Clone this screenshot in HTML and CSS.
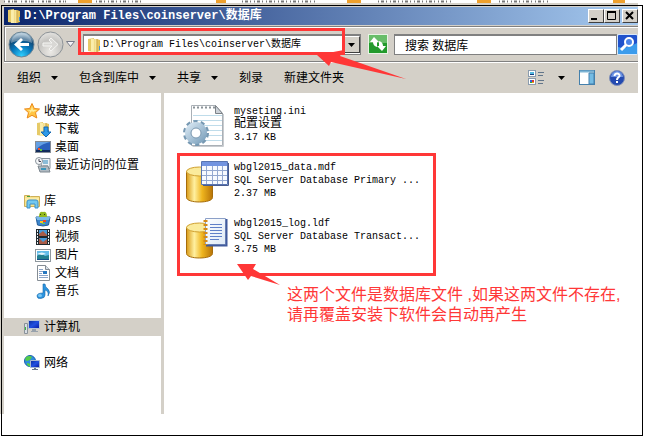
FILE: index.html
```
<!DOCTYPE html>
<html lang="zh-CN">
<head>
<meta charset="utf-8">
<title>数据库</title>
<link rel="stylesheet" href="styles.css">
</head>
<body>
<svg width="0" height="0" class="defs" aria-hidden="true">
  <defs>
    <linearGradient id="gold" x1="0" x2="1"><stop offset="0" stop-color="#d99a16"/><stop offset=".3" stop-color="#fff0a0"/><stop offset=".6" stop-color="#efb51e"/><stop offset="1" stop-color="#b87408"/></linearGradient>
    <linearGradient id="folder" x1="0" x2="1"><stop offset="0" stop-color="#fbf0b0"/><stop offset="1" stop-color="#e2bd50"/></linearGradient>
    <linearGradient id="screen" x1="0" y1="0" x2="1" y2="1"><stop offset="0" stop-color="#0a2a9c"/><stop offset=".5" stop-color="#2050e0"/><stop offset="1" stop-color="#0818a0"/></linearGradient>
    <linearGradient id="sheet" x1="0" y1="0" x2="1" y2="1"><stop offset="0" stop-color="#fff"/><stop offset="1" stop-color="#dde9f6"/></linearGradient>
    <linearGradient id="gear" x1="0" y1="0" x2="1" y2="1"><stop offset="0" stop-color="#d4e4f0"/><stop offset="1" stop-color="#7fa3be"/></linearGradient>
    <radialGradient id="backBall" cx=".5" cy=".95" r=".9"><stop offset="0" stop-color="#2fd0ff"/><stop offset=".45" stop-color="#0878bc"/><stop offset=".75" stop-color="#124b78"/><stop offset="1" stop-color="#a9c4d6"/></radialGradient>
    <radialGradient id="fwdBall" cx=".5" cy=".8" r=".8"><stop offset="0" stop-color="#eceae6"/><stop offset=".6" stop-color="#c5c4c1"/><stop offset="1" stop-color="#e4e3e0"/></radialGradient>
    <symbol id="i-folder" viewBox="0 0 16 16"><path d="M2 2 8 1v14l-6-1z" fill="#e6ca68"/><path d="M5 2h6l3 1v11l-3 1H5z" fill="url(#folder)"/><path d="M7 2v13M10 2v13" stroke="#fff3b8"/><path d="M11 2v13" stroke="#c9a240"/><path d="M13 9h1v4h-1z" fill="#3c92dc"/></symbol>
    <symbol id="i-db" viewBox="0 0 27 36"><path d="M.5 5v26c0 6 26 6 26 0V5z" fill="url(#gold)" stroke="#a66d0c"/><ellipse cx="13.500" cy="5" rx="13" ry="4.500" fill="#fbeb9c" stroke="#d0a030"/></symbol>
  </defs>
</svg>

<div class="page">
  <main class="window">
    <svg class="strip" height="3" aria-hidden="true">
      <path d="M0 1.500h62" stroke="#777" stroke-width="2" stroke-dasharray="1 3 2 2 1 1 3 4"/>
      <path d="M92 1.500h48M238 1.500h75M374 1.500h75M495 1.500h50" stroke="#777" stroke-width="2" stroke-dasharray="1 2 3 2 1 3"/>
      <path d="M74 1.500h14M212 1.500h10M343 1.500h14M473 1.500h14M609 1.500h12" stroke="#eea02d" stroke-width="3"/>
    </svg>
    <header class="titlebar">
      <svg width="16" height="16"><use href="#i-folder"/></svg>
      <h1>D:\Program Files\coinserver\数据库</h1>
      <div class="winbtns">
        <button aria-label="最小化"><svg width="12" height="10"><path d="M2 8h6" stroke="#000" stroke-width="2"/></svg></button>
        <button aria-label="最大化"><svg width="12" height="10"><path d="M2.500 1v7.500h8V1" fill="none" stroke="#000"/><path d="M2 1h9" stroke="#000" stroke-width="2"/></svg></button>
        <button class="close" aria-label="关闭"><svg width="12" height="10"><path d="m3 1 7 7m0-7L3 8" stroke="#000" stroke-width="2"/></svg></button>
      </div>
    </header>

    <nav class="navbar">
      <div class="travel">
        <button aria-label="后退"><svg width="27" height="27" viewBox="0 0 27 27"><circle cx="13.500" cy="13.500" r="12.500" fill="url(#backBall)" stroke="#6c8494"/><path d="M3 12C4-1 23-1 24 12c-6-3-15-3-21 0z" fill="#fff" opacity=".35"/><path d="m13 7-7 6.500 7 6.500 2-2-3-3h9v-3h-9l3-3z" fill="#fff"/></svg></button>
        <button aria-label="前进"><svg width="27" height="27" viewBox="0 0 27 27"><circle cx="13.500" cy="13.500" r="12.500" fill="url(#fwdBall)" stroke="#8c9297"/><path d="m14 7 7 6.500-7 6.500-2-2 3-3H6v-3h9l-3-3z" fill="#d9d8d5" stroke="#f4f4f2"/></svg></button>
        <button aria-label="最近的页面"><svg width="9" height="7"><path d="M.5.500h8L4.500 5.500z" fill="#f4f4f8" stroke="#777b88"/></svg></button>
      </div>
      <div class="address">
        <svg width="16" height="16"><use href="#i-folder"/></svg>
        <input type="text" aria-label="地址" value="D:\Program Files\coinserver\数据库">
        <button class="drop" aria-label="以前的位置"><svg width="7" height="4"><path d="M0 0h7L3.500 4z"/></svg></button>
      </div>
      <button class="refresh" aria-label="刷新"><svg width="20" height="20"><rect width="20" height="20" fill="#e8f4e4"/><rect x="1" y="1" width="18" height="18" fill="#239a2c"/><path d="M1 1h18v8H1z" fill="#68bd69"/><path d="m6 3-4 5h3q0 4 4 5V8h2zM14 17l4-5h-3q0-4-4-5v5H9z" fill="#fff"/></svg></button>
      <input class="search" type="text" aria-label="搜索" value="搜索 数据库">
      <button class="go" aria-label="开始搜索"><svg width="21" height="21"><rect width="21" height="21" rx="2" fill="#d8e8fa"/><rect x="1" y="1" width="19" height="19" rx="1" fill="#2052cc"/><path d="M1 13c7 2 13-1 19-4v11H1z" fill="#3c9cec"/><circle cx="12" cy="8" r="4" fill="#4b83e8" stroke="#fff" stroke-width="2"/><path d="m9 11-5 5" stroke="#fff" stroke-width="3"/></svg></button>
    </nav>

    <div class="toolbar">
      <button>组织<svg class="caret" width="7" height="4"><path d="M0 0h7L3.500 4z"/></svg></button>
      <button>包含到库中<svg class="caret" width="7" height="4"><path d="M0 0h7L3.500 4z"/></svg></button>
      <button>共享<svg class="caret" width="7" height="4"><path d="M0 0h7L3.500 4z"/></svg></button>
      <button>刻录</button>
      <button>新建文件夹</button>
      <div class="views">
        <button aria-label="更改视图"><svg width="16" height="16"><rect x=".5" y=".5" width="7" height="6" fill="#fff" stroke="#8b9cae"/><path d="M2 2h4v2H2z" fill="#54b8e0"/><path d="M2 4h4v1H2z" fill="#173e80"/><rect x=".5" y="8.500" width="7" height="6" fill="#fff" stroke="#8b9cae"/><path d="M2 10h2v2H2z" fill="#2b5fe0"/><path d="M4 10h2v2H4z" fill="#e03c28"/><path d="M2 12h2v1H2z" fill="#38a828"/><path d="M4 12h2v1H4z" fill="#e8a820"/><path d="M10 2.500h6M10 5.500h5M10 10.500h6M10 13.500h5" stroke="#62758a"/></svg></button>
        <button aria-label="更多选项"><svg class="caret" width="7" height="4"><path d="M0 0h7L3.500 4z"/></svg></button>
        <button aria-label="预览窗格"><svg width="16" height="15"><rect x=".5" y=".5" width="15" height="14" fill="#fff" stroke="#4480ac"/><path d="M1 1.500h14" stroke="#7db4d4" stroke-width="2"/><path d="M10 3h5v11h-5z" fill="#74bce4" stroke="#4480ac"/></svg></button>
        <button aria-label="帮助"><svg width="16" height="16"><circle cx="8" cy="8" r="7.500" fill="#244ab0" stroke="#8190b8"/><path d="M2 7a6 6 0 0 1 12 0z" fill="#6b92e2"/><path d="M5.500 6C5.500 2.500 11 3 10.500 6 10 7.500 8 7.500 8 10" fill="none" stroke="#fff" stroke-width="2"/><path d="M7 11h2v2H7z" fill="#fff"/></svg></button>
      </div>
    </div>

    <div class="body">
      <aside class="sidebar">
        <ul>
          <li class="top"><svg width="16" height="16"><path d="m8 .5 2.300 5 5.200.5-4 3.700 1.300 5.300L8 12.300 3.200 15l1.300-5.300-4-3.700 5.200-.5z" fill="#ffc544" stroke="#ec8a1a"/><path d="m8 3 1 4 4 0-4 2-1-1-3 3 1-3-3-1 4 0z" fill="#ffed9c"/></svg>收藏夹</li>
          <li><svg width="16" height="16"><use href="#i-folder"/><path d="M9 6h4v5h3l-5 5-5-5h3z" fill="#2e9ae8" stroke="#1668b0"/></svg>下载</li>
          <li><svg width="16" height="16"><rect x=".5" y="2.500" width="15" height="11" fill="#2b60bc" stroke="#848c96"/><path d="M1 3h14C8 5 4 7 1 11z" fill="#64a0e4"/><path d="M1 11h14v2H1z" fill="#122c5c"/><path d="M3 9h2v2H3z" fill="#f05428"/><path d="M5 10h2v2H5z" fill="#60c840"/></svg>桌面</li>
          <li><svg width="16" height="16"><path d="M5 1.500h10v10h-8z" fill="#eef2f6" stroke="#8a949c"/><path d="M8 3h5v4H8z" fill="#8bbcd8"/><path d="M8 8h5v2H8z" fill="#b9c4cc"/><path d="M3 9h10l2 6H5z" fill="#b0bac2" stroke="#7e8890"/><path d="M6 11h5v2H6z" fill="#3d96bc"/><circle cx="4" cy="4" r="3.500" fill="#f6f8fa" stroke="#8a949c"/><path d="M4 2v2.500h2" stroke="#445" fill="none"/></svg>最近访问的位置</li>
        </ul>
        <ul>
          <li class="top"><svg width="16" height="16"><path d="M.5 2.500h5l1 1h9v10H.5z" fill="#f8e38c" stroke="#ceb058"/><path d="M3 3h3v1H3z" fill="#46a044"/><path d="M1 6h14" stroke="#fff5c4"/><path d="M3 15V9q0-2 2-2h7q2 0 2 2v6h-3v-4H6v4z" fill="#72c8f0" stroke="#3c90c8"/></svg>库</li>
          <li><svg width="16" height="16"><path d="M1 6h14l-1.500 8q-5.500 2-11 0z" fill="#3b85cc" stroke="#225c98"/><path d="M4 6q0-6 4-5 4-1 4 5z" fill="#92b820"/><path d="M5 3h1v1H5zM9 3h1v1H9z" fill="#304010"/><path d="M1 6h14l-1 3H2z" fill="#79b9e8"/><path d="M5 10h3v2H5z" fill="#f8c820"/><path d="M8 9h3v2H8z" fill="#ec4828"/><path d="M7 12h3v1H7z" fill="#78d038"/></svg><span class="latin">Apps</span></li>
          <li><svg width="16" height="16"><path d="M1 0h14v16H1z" fill="#20282e"/><path d="M4 1h8v6H4zM4 9h8v6H4z" fill="#4599d8"/><path d="m4 5 4-3 4 4v1H4zM4 9l4 4 4-3v5H4z" fill="#a85c48"/><path d="M2.500 1v14M13.500 1v14" stroke="#e8eef2" stroke-dasharray="2 1"/></svg>视频</li>
          <li><svg width="16" height="16"><rect x=".5" y="2.500" width="15" height="12" fill="#fff" stroke="#8f989e"/><path d="M2 4h12v9H2z" fill="#65bce8"/><path d="M2 9q4-4 8 0l4-1v5H2z" fill="#248090"/><path d="M2 7q5-3 9 0l-4 1z" fill="#e5f6fc"/><path d="M2 12h12v1H2z" fill="#16508a"/></svg>图片</li>
          <li><svg width="16" height="16"><path d="M2.500.500h8l4 4v11h-12z" fill="#fff" stroke="#858d94"/><path d="M10.500.500v4h4" fill="#d8e0e8" stroke="#858d94"/><path d="M4 4.500h4M4 6.500h4M4 8.500h3M4 10.500h9M4 12.500h9" stroke="#8ba4c8"/><path d="M8 6h4v3H8z" fill="#2878c0"/></svg>文档</li>
          <li><svg width="16" height="16"><path d="M8 1h2q0 3 3 5 3 3 0 7 1-5-3-6v5q0 3-4 3.500Q2 16 2 13q0-3 6-3z" fill="#2c94e0" stroke="#1a68a8" stroke-width=".6"/><ellipse cx="5" cy="12.500" rx="2" ry="1.500" fill="#7cc8f4"/></svg>音乐</li>
        </ul>
        <ul>
          <li class="top selected"><svg width="16" height="16"><path d="M4.500 1.500h11v8h-11z" fill="url(#screen)" stroke="#b8c4d4"/><path d="M8 10h4v2h2v1H7v-1h1z" fill="#98a2ac"/><path d="M.5 4.500h3v10H.500z" fill="#d8dee4" stroke="#8a929a"/><path d="M1 8h1v3H1z" fill="#36b844"/></svg>计算机</li>
        </ul>
        <ul>
          <li class="top"><svg width="16" height="16"><circle cx="6" cy="6" r="5.500" fill="#2e8cdc" stroke="#1b60b0"/><path d="M2 2q4-2 6 0L6 5 3 6 1 5zM3 8l4 1-1 3-3-2z" fill="#55cc48"/><path d="M6.500 5.500h9v7h-9z" fill="url(#screen)" stroke="#a8b8d0"/><path d="M10 13h2v1h2v1H8v-1h2z" fill="#68788c"/></svg>网络</li>
        </ul>
      </aside>

      <section class="files">
        <article>
          <svg width="48" height="48"><path d="M9.500 3.500h24l7 8v32h-31z" fill="#fff" stroke="#aab0b6"/><path d="M33.500 3.500v8h7z" fill="#ccd2d8" stroke="#7c8288"/><path d="M11 13.500h29M11 18.500h29M11 23.500h29M11 28.500h29M11 33.500h29M11 38.500h29" stroke="#bfdcea"/><path d="M11 5.500h22" stroke="#8a9298" stroke-width="2" stroke-dasharray="2 2"/><path d="M41.500 12v32.500h-31" fill="none" stroke="#c8ccd0"/><circle cx="14" cy="31" r="11" fill="none" stroke="#7698b2" stroke-width="4" stroke-dasharray="4 3"/><circle cx="14" cy="31" r="8" fill="none" stroke="url(#gear)" stroke-width="6"/><circle cx="14" cy="31" r="5" fill="#fff" stroke="#7897b0"/></svg>
          <p><span>myseting.ini</span><span class="cjk">配置设置</span><span>3.17 KB</span></p>
        </article>
        <article>
          <svg width="48" height="48"><use href="#i-db" x="4" y="8" width="27" height="37"/><path d="M19.500 3.500h26v23h-26z" fill="#f7faff" stroke="#5874b0"/><path d="M20 4h25v4H20z" fill="#7294e0"/><path d="M20 12.500h25M20 17.500h25M20 22.500h25M24.500 8v18M30.500 8v18M35.500 8v18M40.500 8v18" stroke="#93a8d0"/><path d="M46.500 5v22.500H21" fill="none" stroke="#485c90"/></svg>
          <p><span>wbgl2015_data.mdf</span><span>SQL Server Database Primary ...</span><span>2.37 MB</span></p>
        </article>
        <article>
          <svg width="48" height="48"><use href="#i-db" x="4" y="8" width="27" height="37"/><path d="M23.500 4.500h20v26h-20z" fill="url(#sheet)" stroke="#8ca0c8"/><path d="M44.500 5v26.500H24" fill="none" stroke="#405a9c" stroke-width="2"/><path d="M28 10.500h12M28 13.500h12M28 16.500h12M28 19.500h12M28 22.500h12M28 25.500h9" stroke="#6080c8"/><path d="M23.500 6v25" stroke="#d48a18" stroke-width="4" stroke-dasharray="2 2"/></svg>
          <p><span>wbgl2015_log.ldf</span><span>SQL Server Database Transact...</span><span>3.75 MB</span></p>
        </article>
      </section>
    </div>
  </main>

  <div class="frame"></div>
  <div class="mark mark-address"></div>
  <div class="mark mark-files"></div>
  <svg class="arrow arrow-address" width="90" height="30"><path d="M0 5 27 0l-4 6 66 23-75-17-2 4z"/></svg>
  <svg class="arrow arrow-files" width="44" height="22"><path d="M0 0h19l-3 5 27 16-29-9-3 4z"/></svg>
  <p class="note">这两个文件是数据库文件 ,如果这两文件不存在,<br>请再覆盖安装下软件会自动再产生</p>
</div>
</body>
</html>
```
FILE: styles.css
```
* { box-sizing: border-box; }

body, h1, p, ul { margin: 0; padding: 0; }

body {
  background: #fff;
  color: #000;
  font: 12px/18px "Liberation Sans", "Noto Sans CJK SC", sans-serif;
}

button, input {
  font: inherit;
  color: inherit;
  border: 0;
  padding: 0;
  background: none;
}

button { display: flex; align-items: center; }

svg { display: block; flex: none; }

.defs { position: absolute; }

.page { position: relative; min-height: 100vh; }

.window { margin-right: 8px; padding-left: 4px; background: #d4d0c8; }

.strip { width: 100%; background: #fff; margin-bottom: 4px; }

/* Title bar */
.titlebar {
  display: flex;
  align-items: center;
  gap: 2px;
  height: 18px;
  padding-left: 2px;
  background: linear-gradient(90deg, #0a246a, #a6caf0);
  color: #fff;
}

.titlebar h1 {
  font: bold 12px/18px "Liberation Mono", "Noto Sans CJK SC", monospace;
  white-space: nowrap;
}

.winbtns { display: flex; margin-left: auto; }

.winbtns button {
  width: 16px;
  height: 14px;
  background: #d4d0c8;
  border: 1px solid;
  border-color: #fff #404040 #404040 #fff;
}

.winbtns .close { margin-left: 2px; }

/* Navigation */
.navbar {
  display: flex;
  align-items: center;
  height: 36px;
  margin-top: 1px;
  border: 1px solid #808080;
  border-width: 1px 0 1px 1px;
  box-shadow: inset 1px 1px #fff, 0 1px #fff;
}

.travel { display: flex; align-items: center; gap: 2px; padding-left: 3px; }

.address {
  display: flex;
  align-items: center;
  flex: 288;
  height: 21px;
  margin-left: 8px;
  padding-left: 2px;
  background: #fff;
  border: 1px solid #808080;
  border-top-width: 2px;
}

.address input {
  flex: 1;
  min-width: 0;
  padding-left: 1px;
  font: 10px/18px "Liberation Mono", "Noto Sans CJK SC", monospace;
}

.drop {
  justify-content: center;
  width: 16px;
  height: 17px;
  background: #d4d0c8;
  border: 1px solid;
  border-color: #fff #404040 #404040 #fff;
}

.refresh { margin: 0 6px 0 7px; }

.search {
  flex: 222;
  min-width: 0;
  height: 21px;
  padding-left: 10px;
  background: #fff;
  border: 1px solid #808080;
  border-top-width: 2px;
}

/* Toolbar */
.toolbar {
  display: flex;
  align-items: center;
  gap: 21px;
  height: 31px;
  padding: 0 13px;
}

.toolbar button { gap: 10px; white-space: nowrap; }

.views { display: flex; align-items: center; gap: 14px; margin-left: auto; }

/* Content */
.body { display: flex; }

.sidebar {
  width: 157px;
  padding: 9px 0 24px;
  background: #fff;
  margin-right: 3px;
}

.sidebar ul { list-style: none; margin-bottom: 18px; }

.sidebar li {
  display: flex;
  align-items: center;
  gap: 4px;
  height: 18px;
  padding-left: 31px;
}

.sidebar .top { padding-left: 20px; }

.sidebar .selected { background: #d4d0c8; }

.latin { font: 11px/18px "Liberation Mono", monospace; }

.files { flex: 1; background: #fff; padding: 9px 0 0 18px; }

.files article { display: flex; gap: 4px; height: 56px; }

.files p {
  padding-top: 3px;
  font: 10px/13px "Liberation Mono", "Noto Sans CJK SC", monospace;
}

.files span { display: block; white-space: pre; }

.files .cjk { font-size: 12px; }

/* Annotations drawn over the window */
.frame {
  position: absolute;
  inset: 5px 3px 7px 1px;
  border: 1px solid #000;
}

.mark { position: absolute; border: 3px solid #ff3737; }

.mark-address { left: 78px; top: 28px; width: 267px; height: 27px; }

.mark-files { left: 177px; top: 153px; width: 259px; height: 123px; }

.arrow { position: absolute; fill: #ff3737; }

.arrow-address { left: 317px; top: 50px; }

.arrow-files { left: 237px; top: 264px; }

.note {
  position: absolute;
  left: 287px;
  top: 285px;
  color: #ff3737;
  font-size: 16px;
  line-height: 20px;
}
```
